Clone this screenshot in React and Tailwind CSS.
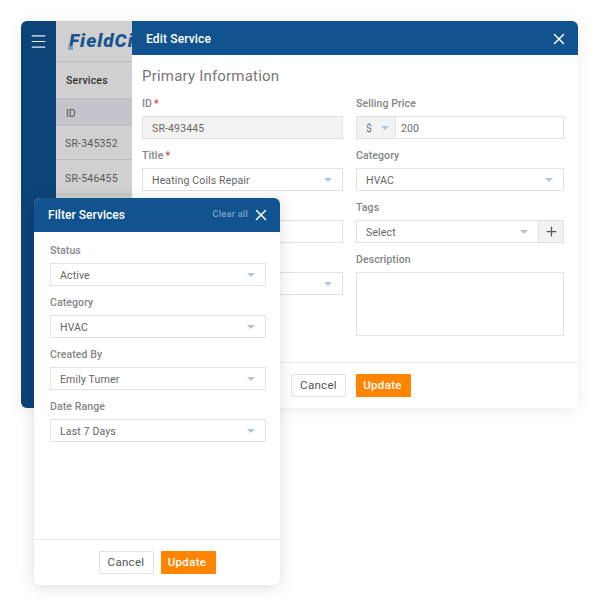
import React from 'react';
import { X, Plus, Menu } from 'lucide-react';

const Caret = () => (
    <svg width="8" height="4" viewBox="0 0 8 4" className="shrink-0">
        <path d="M0 0h8L4 4z" fill="#b3c4da" />
    </svg>
);

const Field = ({ label, required, className = '', children }) => (
    <div className={`flex flex-col ${className}`}>
        <label className="h-[15px] mb-[5px] text-[10.5px] leading-[15px] font-medium text-[#858585] tracking-[0.1px]">
            {label}
            {required && <span className="text-[#e53935] ml-[2px]">*</span>}
        </label>
        {children}
    </div>
);

const Select = ({ value, className = '' }) => (
    <div className={`h-[23px] flex items-center justify-between pl-[9px] pr-[10px] bg-white border border-[#e2e2e2] text-[10.5px] text-[#666] tracking-[0.15px] ${className}`}>
        <span className="pt-[2px]">{value}</span>
        <Caret />
    </div>
);

const Buttons = () => (
    <>
        <button className="w-[55px] h-[23px] pt-[1px] bg-white border border-[#e2e2e2] rounded-[1px] text-[11.5px] text-[#555] tracking-[0.3px]">
            Cancel
        </button>
        <button className="w-[55px] h-[23px] pt-[1px] pr-[2px] bg-[#ff8500] rounded-[1px] text-[11.5px] font-medium text-white tracking-[0.3px]">
            Update
        </button>
    </>
);

const EditModal = () => (
    <div className="flex-1 flex flex-col bg-white">
        <div className="h-[34px] shrink-0 flex items-center justify-between pl-[14px] pr-[10px] pt-[1px] bg-[#10538f] rounded-tr-[6px]">
            <h2 className="text-[12px] font-medium text-white tracking-[0.15px]">Edit Service</h2>
            <X size={18} strokeWidth={2} className="text-white" />
        </div>

        <div className="flex-1 pl-[10px] pr-[14px] pt-[13px]">
            <h3 className="h-[16px] mb-[12px] text-[15px] leading-[16px] text-[#777] tracking-[0.2px]">Primary Information</h3>
            <div className="grid grid-cols-[201px_208px] gap-x-[13px] gap-y-[9px]">
                <Field label="ID" required>
                    <div className="h-[23px] flex items-center pl-[9px] pt-[2px] bg-[#f2f2f2] border border-[#e2e2e2] text-[10.5px] text-[#6a6a6a] tracking-[0.15px]">SR-493445</div>
                </Field>
                <Field label="Selling Price">
                    <div className="h-[23px] flex border border-[#e2e2e2] text-[10.5px] tracking-[0.15px]">
                        <div className="w-[39px] flex items-center gap-[9px] pl-[9px] bg-[#f2f2f2] border-r border-[#e2e2e2] text-[#777]">
                            <span className="pt-[2px]">$</span>
                            <Caret />
                        </div>
                        <div className="flex items-center pl-[5px] pt-[2px] text-[#6a6a6a]">200</div>
                    </div>
                </Field>
                <Field label="Title" required>
                    <Select value="Heating Coils Repair" />
                </Field>
                <Field label="Category">
                    <Select value="HVAC" />
                </Field>
                <Field label="">
                    <div className="h-[23px] bg-white border border-[#e2e2e2]" />
                </Field>
                <Field label="Tags">
                    <div className="h-[23px] flex">
                        <Select value="Select" className="flex-1 border-r-0" />
                        <div className="w-[26px] flex items-center justify-center bg-[#f2f2f2] border border-[#e2e2e2]">
                            <Plus size={15} strokeWidth={2} className="text-[#555]" />
                        </div>
                    </div>
                </Field>
                <Field label="">
                    <Select value="" />
                </Field>
                <Field label="Description">
                    <div className="h-[64px] bg-white border border-[#e2e2e2]" />
                </Field>
            </div>
        </div>

        <div className="h-[46px] shrink-0 flex items-center gap-[10px] pl-[159px] border-t border-[#eaeaea]">
            <Buttons />
        </div>
    </div>
);

const FilterPanel = () => (
    <div className="absolute left-[34px] top-[198px] w-[246px] h-[387px] flex flex-col bg-white rounded-[6px] shadow-[0_2px_16px_rgba(0,0,0,0.14)]">
        <div className="h-[34px] shrink-0 flex items-center justify-between pl-[14px] pr-[10px] bg-[#10538f] rounded-t-[6px]">
            <h2 className="text-[12px] font-medium text-white tracking-[0.05px]">Filter Services</h2>
            <div className="flex items-center gap-[4px]">
                <span className="text-[9px] font-medium text-[#7fa3c7] tracking-[0.3px]">Clear all</span>
                <X size={18} strokeWidth={2} className="text-white" />
            </div>
        </div>
        <div className="flex-1 flex flex-col gap-[9px] pl-[16px] pr-[14px] pt-[11px]">
            <Field label="Status"><Select value="Active" /></Field>
            <Field label="Category"><Select value="HVAC" /></Field>
            <Field label="Created By"><Select value="Emily Turner" /></Field>
            <Field label="Date Range"><Select value="Last 7 Days" /></Field>
        </div>
        <div className="h-[46px] shrink-0 flex items-center justify-center gap-[7px] border-t border-[#eaeaea]">
            <Buttons />
        </div>
    </div>
);

export default function App() {
    return (
        <div className="relative w-[599px] h-[606px] bg-white pl-[21px] pt-[21px] font-['Roboto',sans-serif]">
            <div className="w-[557px] h-[387px] flex rounded-[6px] shadow-[0_2px_16px_rgba(0,0,0,0.08)]">
                <div className="w-[35px] shrink-0 flex justify-center pt-[11px] bg-[#0d4478] rounded-l-[6px]">
                    <Menu size={19} strokeWidth={1.5} className="text-[#e6edf4]" />
                </div>
                <div className="w-[76px] shrink-0 bg-[#d0d0d0] overflow-hidden">
                    <div className="relative h-[41px] flex items-center pl-[13px] border-b border-[#bdbdbd]">
                        <span className="text-[19px] font-black italic text-[#1a5590] tracking-[1px] whitespace-nowrap">FieldCi</span>
                        <span className="absolute left-[12px] top-[25px] w-[5px] h-[4px] bg-[#7f9cba]" />
                    </div>
                    <div className="h-[36px] flex items-center pl-[10px] pt-[1px] text-[10.5px] font-medium text-[#333] tracking-[0.2px]">Services</div>
                    <div className="h-[28px] flex items-center pl-[10px] pt-[3px] bg-[#c3c5c8] border-y border-[#bdbdbd] text-[10.5px] text-[#555]">ID</div>
                    <div className="h-[34px] flex items-center pl-[9px] pt-[3px] border-b border-[#bdbdbd] text-[10.5px] text-[#5a5a5a] tracking-[0.2px]">SR-345352</div>
                    <div className="h-[35px] flex items-center pl-[9px] pt-[4px] border-b border-[#bdbdbd] text-[10.5px] text-[#5a5a5a] tracking-[0.2px]">SR-546455</div>
                </div>
                <EditModal />
            </div>
            <FilterPanel />
        </div>
    );
}
